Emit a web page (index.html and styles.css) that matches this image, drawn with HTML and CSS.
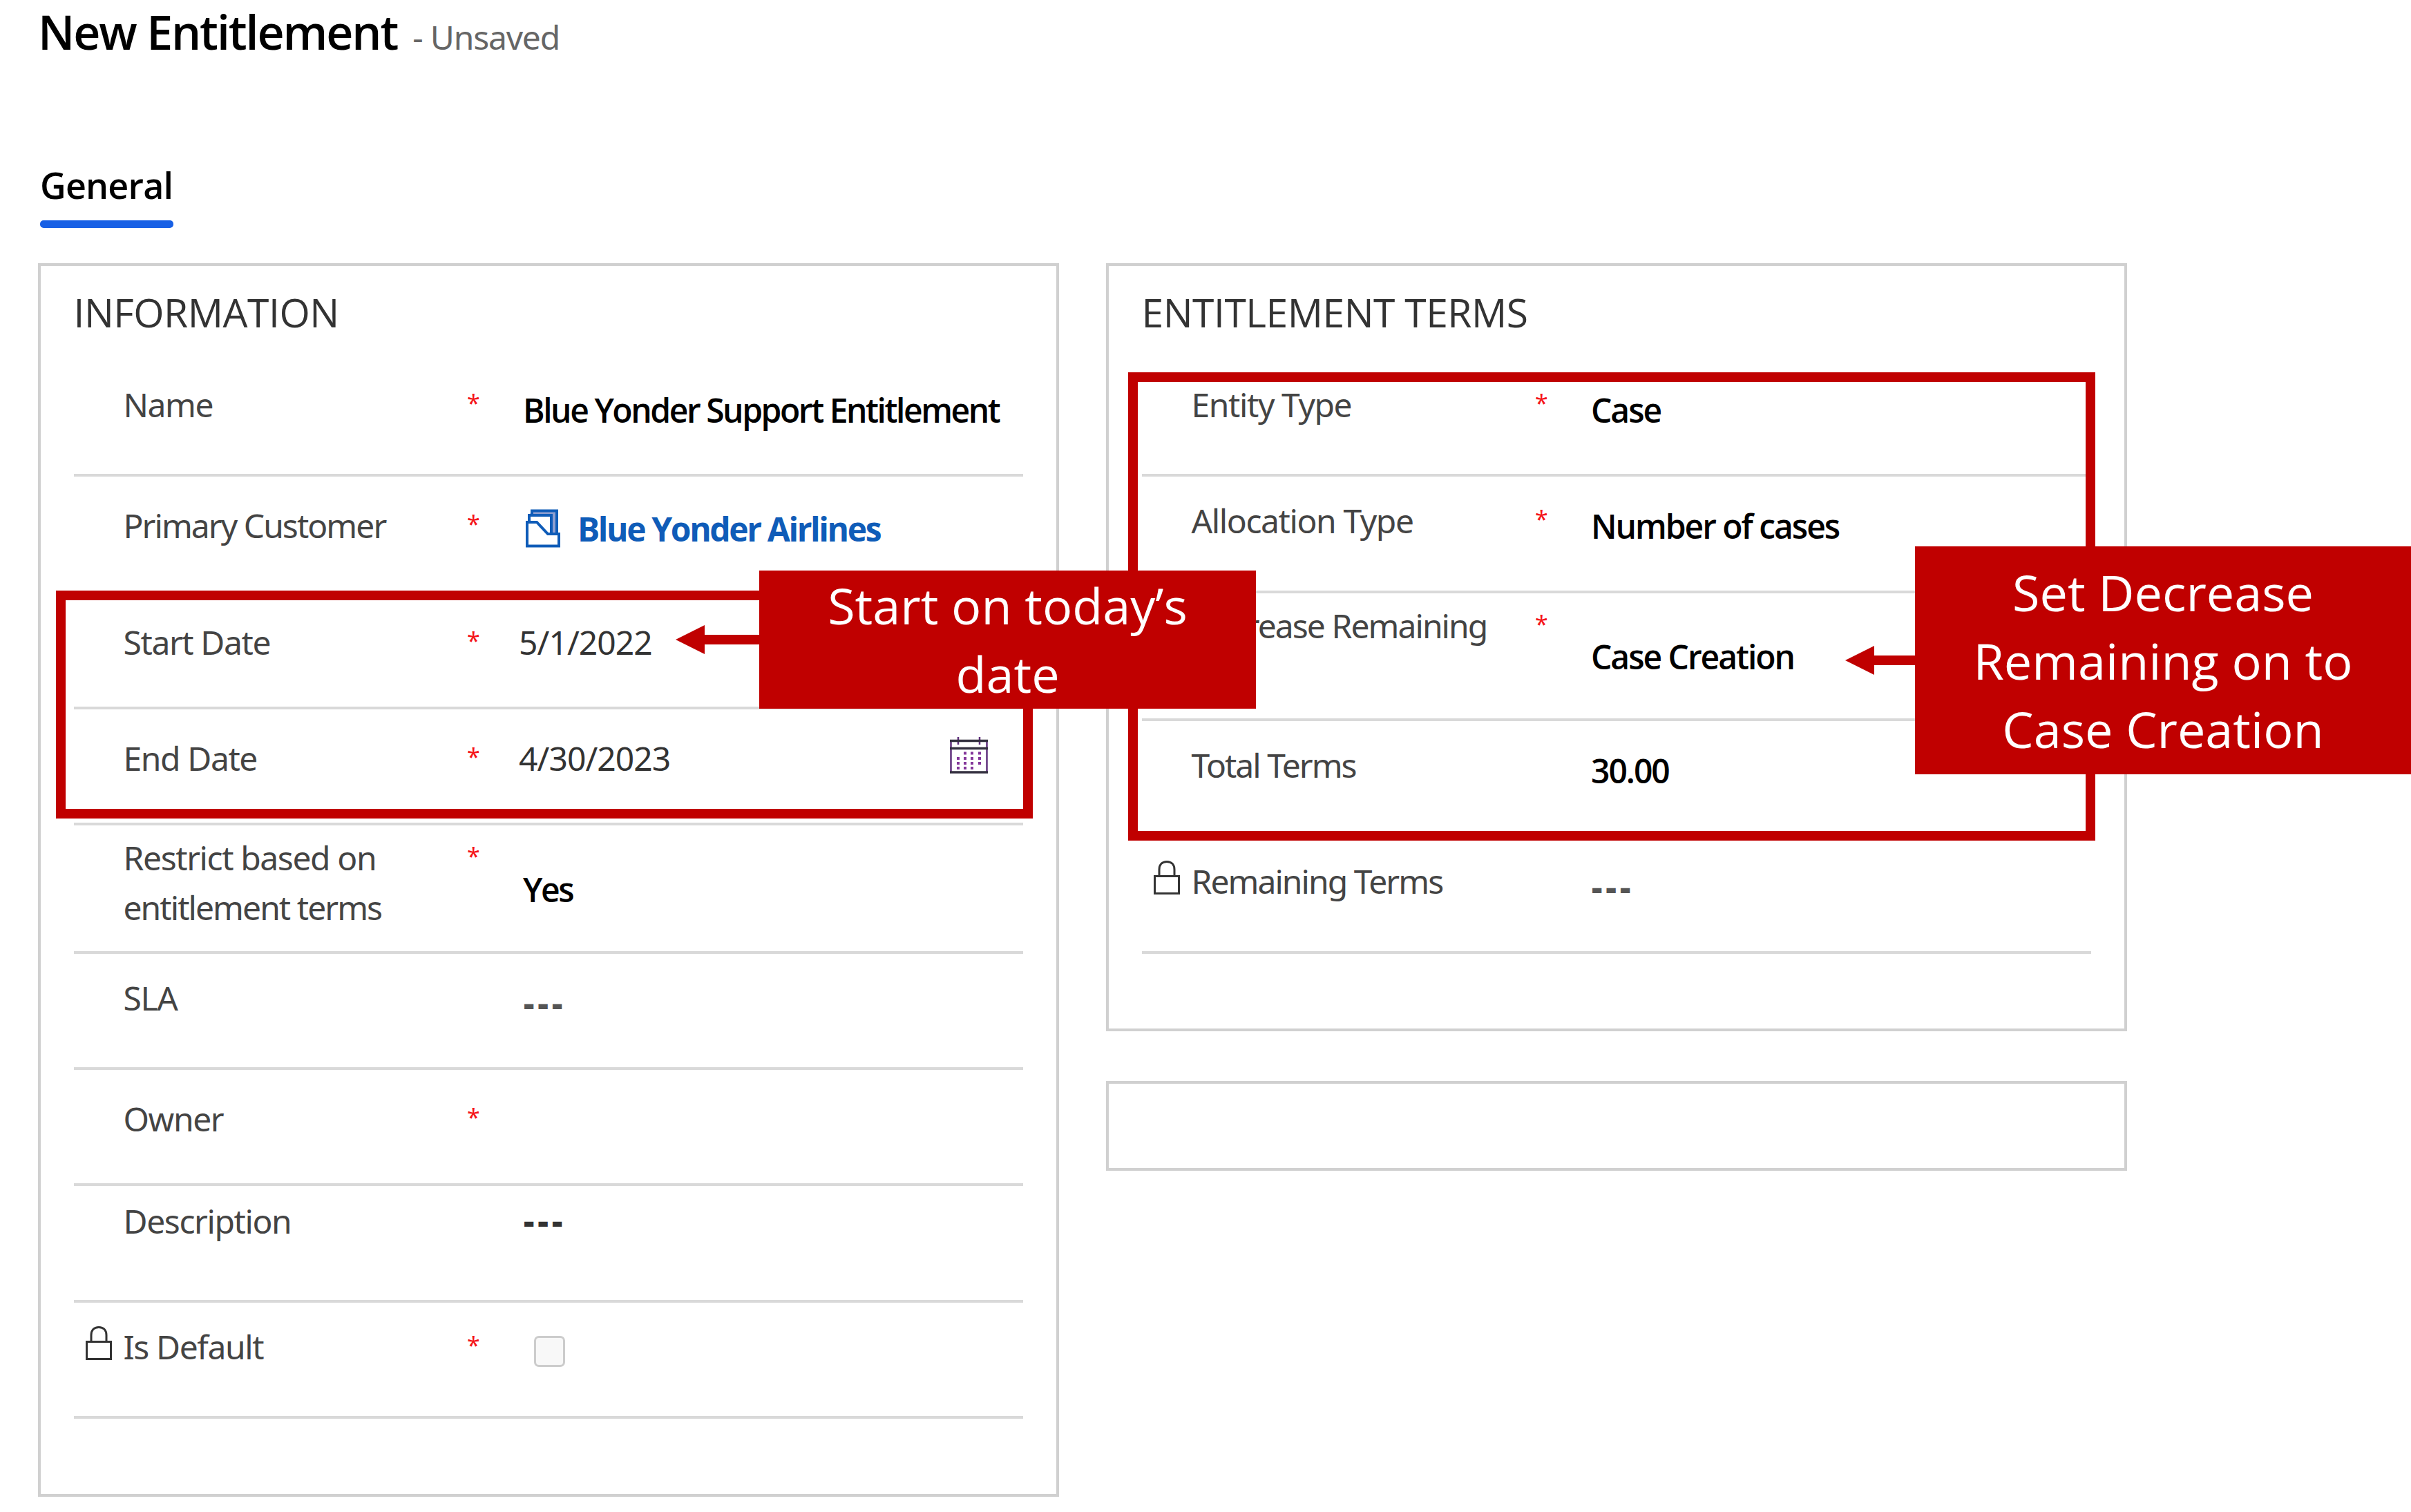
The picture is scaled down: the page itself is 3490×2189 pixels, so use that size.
FILE: index.html
```html
<!DOCTYPE html>
<html lang="en">
<head>
<meta charset="UTF-8">
<meta name="viewport" content="width=device-width, initial-scale=1.0">
<title>New Entitlement</title>
<link rel="stylesheet" href="styles.css">
</head>
<body>
<header class="page-header">
    <h1>New Entitlement</h1>
    <span class="status">- Unsaved</span>
</header>
<nav class="tabs">
    <a class="tab active">General</a>
</nav>

<main class="columns">
    <section class="card information">
        <h2>INFORMATION</h2>
        <div class="row">
            <span class="lock"></span>
            <span class="label">Name</span>
            <span class="required">*</span>
            <span class="value long">Blue Yonder Support Entitlement</span>
        </div>
        <div class="row low">
            <span class="lock"></span>
            <span class="label tight">Primary Customer</span>
            <span class="required">*</span>
            <a class="value link">
                <svg class="account-icon" viewBox="0 0 51 57">
                    <path class="shade" d="M6 10L10 3.500H46V37H38V10Z"/>
                    <path d="M10 10V3.500H46V37"/>
                    <path d="M6 20V10H38V37"/>
                    <path d="M3 20H17L33 37H49V54.500H3Z"/>
                </svg>
                <span>Blue Yonder Airlines</span>
            </a>
        </div>
        <div class="row low">
            <span class="lock"></span>
            <span class="label">Start Date</span>
            <span class="required">*</span>
            <span class="value date">5/1/2022</span>
        </div>
        <div class="row low">
            <span class="lock"></span>
            <span class="label">End Date</span>
            <span class="required">*</span>
            <span class="value date">4/30/2023
                <svg class="calendar-icon" viewBox="0 0 55 53">
                    <path class="side" d="M1.500 4V52M53.500 4V52M12 0V11M43 0V11"/>
                    <path class="bar" d="M0 5.500H55M0 16.500H55M0 51H55"/>
                    <path class="dots" d="M22 21.500v4M32 21.500v4M43 21.500v4M12 29v4M22 29v4M32 29v4M43 29v4M12 36v4M22 36v4M32 36v4M43 36v4M12 43v4M22 43v4M32 43v4"/>
                </svg>
            </span>
        </div>
        <div class="row two-line">
            <span class="lock"></span>
            <span class="label">Restrict based on<br><span class="tight">entitlement terms</span></span>
            <span class="required">*</span>
            <span class="value long">Yes</span>
        </div>
        <div class="row">
            <span class="lock"></span>
            <span class="label">SLA</span>
            <span class="required"></span>
            <span class="value empty">---</span>
        </div>
        <div class="row low">
            <span class="lock"></span>
            <span class="label">Owner</span>
            <span class="required">*</span>
            <span class="value"></span>
        </div>
        <div class="row note">
            <span class="lock"></span>
            <span class="label">Description</span>
            <span class="required"></span>
            <span class="value empty dark">---</span>
        </div>
        <div class="row">
            <svg class="lock" viewBox="0 0 38 49">
                <path d="M1.500 22.500H36.500V47.500H1.500Z"/>
                <path d="M8 22V13C8 6 12 1.500 19 1.500S30 6 30 13V22"/>
            </svg>
            <span class="label">Is Default</span>
            <span class="required">*</span>
            <span class="checkbox"></span>
        </div>
    </section>

    <div class="side-column">
        <section class="card terms">
            <h2>ENTITLEMENT TERMS</h2>
            <div class="row">
                <span class="lock"></span>
                <span class="label">Entity Type</span>
                <span class="required">*</span>
                <span class="value">Case</span>
            </div>
            <div class="row">
                <span class="lock"></span>
                <span class="label">Allocation Type</span>
                <span class="required">*</span>
                <span class="value">Number of cases</span>
            </div>
            <div class="row two-line">
                <span class="lock"></span>
                <span class="label tight">Decrease Remaining</span>
                <span class="required">*</span>
                <span class="value">Case Creation</span>
            </div>
            <div class="row">
                <span class="lock"></span>
                <span class="label tight">Total Terms</span>
                <span class="required"></span>
                <span class="value">30.00</span>
            </div>
            <div class="row">
                <svg class="lock" viewBox="0 0 38 49">
                    <path d="M1.500 22.500H36.500V47.500H1.500Z"/>
                    <path d="M8 22V13C8 6 12 1.500 19 1.500S30 6 30 13V22"/>
                </svg>
                <span class="label tight">Remaining Terms</span>
                <span class="required"></span>
                <span class="value empty">---</span>
            </div>
        </section>
        <section class="card blank"></section>
    </div>
</main>

<!-- annotations over the form -->
<div class="highlight dates"></div>
<div class="highlight term-fields"></div>
<svg class="arrow arrow-dates" viewBox="0 0 122 42"><path d="M0 21L42 0V14H122V28H42V42Z"/></svg>
<svg class="arrow arrow-terms" viewBox="0 0 122 42"><path d="M0 21L42 0V14H122V28H42V42Z"/></svg>
<div class="callout callout-dates">Start on today’s<br>date</div>
<div class="callout callout-terms">Set Decrease<br>Remaining on to<br>Case Creation</div>
</body>
</html>
```
FILE: styles.css
```css
* {
    box-sizing: border-box;
}
body {
    position: relative;
    width: 3490px;
    height: 2189px;
    margin: 0;
    padding-left: 55px;
    overflow: hidden;
    background-color: #fff;
    font-family: "Noto Sans", sans-serif;
    font-size: 48px;
    line-height: 72px;
    color: #444;
}

/* header */
.page-header {
    display: flex;
    align-items: baseline;
    height: 90px;
}
h1 {
    margin: 0;
    font-family: "Open Sans", sans-serif;
    font-size: 68px;
    font-weight: 600;
    line-height: 92px;
    letter-spacing: -2.1px;
    color: #000;
}
.status {
    margin-left: 22px;
    letter-spacing: -1.2px;
    color: #666;
}
.tabs {
    display: flex;
    margin-top: 142px;
    padding-left: 3px;
}
.tab {
    position: relative;
    width: 193px;
    height: 98px;
    font-family: "Open Sans", sans-serif;
    font-size: 52px;
    font-weight: 600;
    letter-spacing: -0.8px;
    color: #000;
}
.tab.active::after {
    content: "";
    position: absolute;
    left: 0;
    bottom: 0;
    width: 100%;
    height: 11px;
    border-radius: 5px;
    background-color: #1860e5;
}

/* cards */
.columns {
    display: flex;
    align-items: flex-start;
    gap: 68px;
    margin-top: 51px;
}
.card {
    width: 1478px;
    padding: 27px 48px 0 47.5px;
    border: 4px solid #d0d0d0;
}
.information {
    height: 1786px;
}
.terms {
    height: 1112px;
}
.blank {
    height: 130px;
    margin-top: 72px;
}
h2 {
    margin: 0 0 30px;
    font-family: "Open Sans", sans-serif;
    font-size: 57px;
    font-weight: 400;
    line-height: 80px;
    letter-spacing: -0.5px;
    color: #333;
}

/* rows */
.row {
    display: grid;
    grid-template-columns: 70px 499.5px 80px 1fr;
    align-items: start;
    height: 168.3px;
    border-bottom: 4px solid #d9d9d9;
}
.label {
    margin: 28px 0 0 2px;
    letter-spacing: -1.4px;
}
.tight {
    letter-spacing: -1.95px;
}
.required {
    margin-top: 25px;
    font-size: 34px;
    color: #f5151b;
}
.value {
    display: flex;
    margin: 35.5px 0 0 1px;
    font-family: "Open Sans", sans-serif;
    font-weight: 600;
    letter-spacing: -2.05px;
    color: #000;
}
.value.long {
    letter-spacing: -2.45px;
}
.row.low .label {
    margin-top: 35px;
}
.row.low .required {
    margin-top: 32px;
}
.row.two-line {
    height: 185.5px;
}
.two-line .label {
    margin-top: 11px;
}
.two-line .required {
    margin-top: 8px;
}
.two-line .value {
    margin-top: 56.5px;
}
.row.note .label {
    margin-top: 15px;
}
.row.note .value {
    margin-top: 14px;
}
.value.date {
    margin-left: -5px;
    font-family: "Noto Sans", sans-serif;
    font-weight: 400;
    letter-spacing: -0.95px;
    color: #333;
}
.value.link {
    margin: 39.5px 0 0;
    font-weight: 700;
    letter-spacing: -2.4px;
    color: #0f5cb8;
}
.value.empty {
    padding-left: 1px;
    font-weight: 800;
    letter-spacing: 5.2px;
    color: #555;
}
.value.empty.dark {
    color: #333;
}

/* icons */
svg {
    display: block;
    fill: none;
}
svg.lock {
    width: 38px;
    height: 49px;
    margin: 34px 0 0 17.5px;
    stroke: #333;
    stroke-width: 3;
}
.account-icon {
    width: 51px;
    height: 57px;
    margin: 6.5px 25px 0 4px;
    stroke: #0f5cb8;
    stroke-width: 4;
}
.account-icon .shade {
    fill: #8f9fd0;
    stroke: none;
}
.calendar-icon {
    width: 55px;
    height: 53px;
    margin: 5px 51px 0 auto;
}
.calendar-icon .side {
    stroke: #5f2f7c;
    stroke-width: 2.5;
}
.calendar-icon .bar {
    stroke: #33303f;
    stroke-width: 3.5;
}
.calendar-icon .dots {
    stroke: #84379a;
    stroke-width: 4;
}
.checkbox {
    width: 45px;
    height: 45px;
    margin: 48px 0 0 17px;
    border: 3px solid #ccc;
    border-radius: 7px;
    background-color: #f8f8f8;
}

/* annotations */
.highlight {
    position: absolute;
    border: 14px solid #c00000;
}
.dates {
    left: 81px;
    top: 855px;
    width: 1414px;
    height: 330px;
}
.term-fields {
    left: 1633px;
    top: 539px;
    width: 1400px;
    height: 678px;
}
.arrow {
    position: absolute;
    width: 122px;
    height: 42px;
    fill: #c00000;
}
.arrow-dates {
    left: 978px;
    top: 905px;
}
.arrow-terms {
    left: 2671px;
    top: 935px;
}
.callout {
    position: absolute;
    display: grid;
    align-content: center;
    background-color: #c00000;
    font-family: "Open Sans", sans-serif;
    font-size: 72px;
    line-height: 99px;
    text-align: center;
    color: #fff;
}
.callout-dates {
    left: 1099px;
    top: 826px;
    width: 719px;
    height: 200px;
}
.callout-terms {
    left: 2772px;
    top: 791px;
    width: 718px;
    height: 330px;
}
```
